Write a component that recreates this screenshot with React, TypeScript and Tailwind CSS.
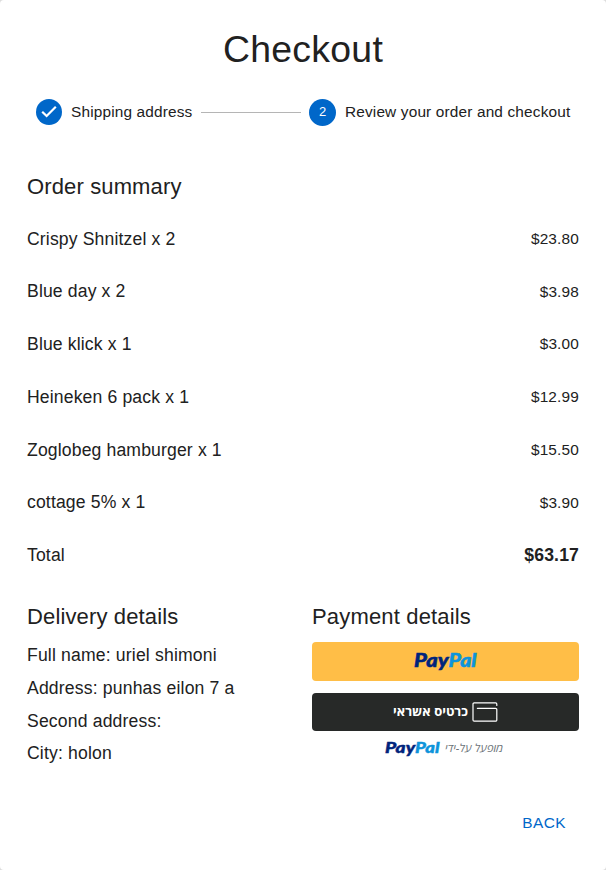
type Item = { name: string; price: string };

const items: Item[] = [
  { name: 'Crispy Shnitzel x 2', price: '$23.80' },
  { name: 'Blue day x 2', price: '$3.98' },
  { name: 'Blue klick x 1', price: '$3.00' },
  { name: 'Heineken 6 pack x 1', price: '$12.99' },
  { name: 'Zoglobeg hamburger x 1', price: '$15.50' },
  { name: 'cottage 5% x 1', price: '$3.90' },
];

const details = [
  'Full name: uriel shimoni',
  'Address: punhas eilon 7 a',
  'Second address:',
  'City: holon',
];

function PayPalLogo({ className }: { className: string }) {
  return (
    <svg className={`overflow-visible ${className}`} direction="ltr" viewBox="0 0 63 22" role="img" aria-label="PayPal">
      <text x="0" y="16.5" textLength="34.5" lengthAdjust="spacingAndGlyphs" fill="#00247c" stroke="#00247c" strokeWidth="0.5" className="font-['Lato'] text-[18px] font-black italic">Pay</text>
      <text x="34.5" y="16.5" textLength="28" lengthAdjust="spacingAndGlyphs" fill="#0d94db" stroke="#0d94db" strokeWidth="0.5" className="font-['Lato'] text-[18px] font-black italic">Pal</text>
    </svg>
  );
}

function CardIcon() {
  return (
    <svg className="h-5 w-[26px]" viewBox="0 0 26 20" fill="none" stroke="#fff" strokeWidth="1.2" strokeLinecap="round">
      <path d="M24.8 3.4V2a1.2 1.2 0 0 0-1.2-1.2H2.2A1.2 1.2 0 0 0 1 2v16a1.2 1.2 0 0 0 1.2 1.2h21.4a1.2 1.2 0 0 0 1.2-1.2V7.6a1.2 1.2 0 0 0-1.2-1.2H5.4" />
    </svg>
  );
}

function Stepper() {
  return (
    <div className="flex h-[26px] items-center pl-9 text-[15.4px] tracking-[0.01em]">
      <svg className="size-[26px] shrink-0" viewBox="0 0 26 26">
        <circle cx="13" cy="13" r="13" fill="#0067c9" />
        <path d="M6.2 12.7l4.4 4.3 9.2-9.2" fill="none" stroke="#fff" strokeWidth="2.2" />
      </svg>
      <span className="ml-[9px] w-[121px] whitespace-nowrap">Shipping address</span>
      <span className="ml-[9px] h-px w-[100px] bg-[#b5b5b5]" />
      <span className="ml-2 flex size-[27px] shrink-0 items-center justify-center rounded-full bg-[#0067c9] text-[13px] tracking-normal text-white">2</span>
      <span className="ml-[9px] whitespace-nowrap">Review your order and checkout</span>
    </div>
  );
}

export default function App() {
  return (
    <div className="h-[870px] w-[606px] bg-[#dcdcdc] font-['Liberation_Sans',Arial,sans-serif] text-[#212121]">
      <main className="h-full overflow-hidden rounded-[4px] bg-white">
        <h1 className="flex h-[99px] items-center justify-center text-[37.4px] tracking-[0.00735em]">Checkout</h1>
        <Stepper />
        <div className="px-[27px] pt-[46px]">
          <h2 className="h-[41.5px] text-[22px] leading-[31px] tracking-[0.006em]">Order summary</h2>
          <ul>
            {items.map((item) => (
              <li key={item.name} className="flex h-[52.75px] items-center justify-between">
                <span className="text-[17.6px] tracking-[0.008em]">{item.name}</span>
                <span className="-mt-px text-[15.4px] tracking-[0.01071em]">{item.price}</span>
              </li>
            ))}
            <li className="flex h-[52.7px] items-center justify-between text-[17.6px] tracking-[0.008em]">
              <span>Total</span>
              <span className="font-bold">$63.17</span>
            </li>
          </ul>
          <div className="mt-[19.7px] grid grid-cols-[285px_267px]">
            <section>
              <h2 className="text-[22px] leading-[31px] tracking-[0.0065em]">Delivery details</h2>
              <div className="mt-[7px]">
                {details.map((line) => (
                  <p key={line} className="h-[32.6px] text-[17.6px] leading-[32.6px] tracking-[0.00938em]">{line}</p>
                ))}
              </div>
            </section>
            <section>
              <h2 className="text-[22px] leading-[31px] tracking-[0.0075em]">Payment details</h2>
              <button className="mt-[9.5px] flex h-[39px] w-full items-center justify-center rounded-[4px] bg-[#ffbe47] pr-px">
                <PayPalLogo className="h-[22px] w-[63px]" />
              </button>
              <button dir="rtl" className="mt-3 flex h-[38px] w-full items-center justify-center gap-1 rounded-[4px] bg-[#272928] text-white">
                <CardIcon />
                <span className="font-['Open_Sans','DejaVu_Sans',sans-serif] text-[13px] font-bold">כרטיס אשראי</span>
              </button>
              <div dir="rtl" className="mt-1.5 flex items-center justify-center gap-[5px] pr-[3px]">
                <span className="font-['Open_Sans','DejaVu_Sans',sans-serif] text-[11.4px] font-medium italic leading-[22px] text-[#6c7378]">מופעל על-ידי</span>
                <PayPalLogo className="h-[20px] w-[55px]" />
              </div>
            </section>
          </div>
        </div>
        <div className="mt-[39px] flex justify-end pr-10">
          <button className="text-[15.4px] leading-[27px] tracking-[0.02857em] text-[#0067c9]">BACK</button>
        </div>
      </main>
    </div>
  );
}
